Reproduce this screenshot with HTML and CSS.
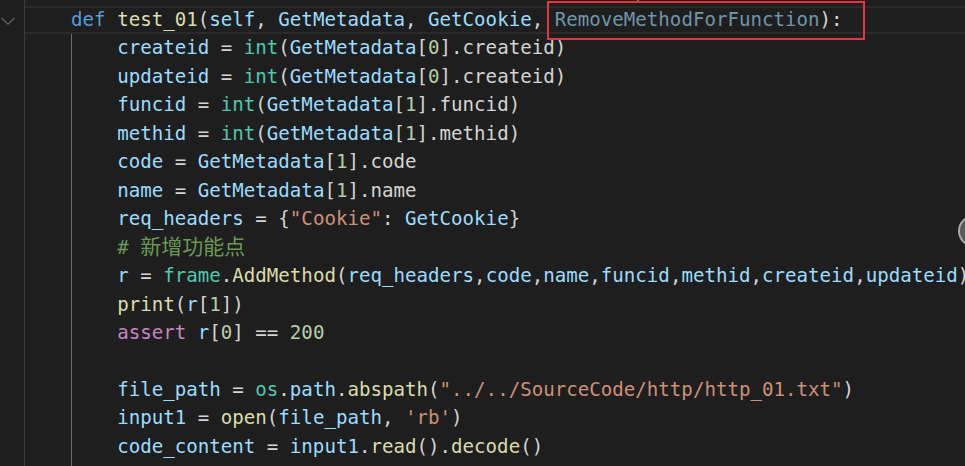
FILE: index.html
```html
<!DOCTYPE html>
<html lang="zh">
<head>
<meta charset="utf-8">
<title>test_01</title>
<link rel="stylesheet" href="styles.css">
</head>
<body>
<div class="editor">
  <div class="gutter">
    <div class="gline"></div>
    <div class="gline"><svg class="fold" width="16" height="10" viewBox="0 0 16 10"><path d="M1.5 2 L8 8.2 L14.5 2" fill="none" stroke="#5f5f5f" stroke-width="1.3"/></svg></div>
  </div>
  <div class="code">
<div class="line"><span class="cm">    #   er  (Metadata, Cookie, Method, Function) -&gt; 'p'</span></div>
<div class="line cur"><span class="tx">    </span><span class="kw">def</span> <span class="fn">test_01</span><span class="p">(</span><span class="v">self</span><span class="p">,</span> <span class="v">GetMetadata</span><span class="p">,</span> <span class="v">GetCookie</span><span class="p">,</span> <span class="dim">RemoveMethodForFunction</span><span class="p">):</span></div>
<div class="line g"><span class="ind">    </span>    <span class="v">createid</span> = <span class="cl">int</span><span class="p">(</span><span class="v">GetMetadata</span><span class="p">[</span><span class="n">0</span><span class="p">]</span>.createid<span class="p">)</span></div>
<div class="line g"><span class="ind">    </span>    <span class="v">updateid</span> = <span class="cl">int</span><span class="p">(</span><span class="v">GetMetadata</span><span class="p">[</span><span class="n">0</span><span class="p">]</span>.createid<span class="p">)</span></div>
<div class="line g"><span class="ind">    </span>    <span class="v">funcid</span> = <span class="cl">int</span><span class="p">(</span><span class="v">GetMetadata</span><span class="p">[</span><span class="n">1</span><span class="p">]</span>.funcid<span class="p">)</span></div>
<div class="line g"><span class="ind">    </span>    <span class="v">methid</span> = <span class="cl">int</span><span class="p">(</span><span class="v">GetMetadata</span><span class="p">[</span><span class="n">1</span><span class="p">]</span>.methid<span class="p">)</span></div>
<div class="line g"><span class="ind">    </span>    <span class="v">code</span> = <span class="v">GetMetadata</span><span class="p">[</span><span class="n">1</span><span class="p">]</span>.code</div>
<div class="line g"><span class="ind">    </span>    <span class="v">name</span> = <span class="v">GetMetadata</span><span class="p">[</span><span class="n">1</span><span class="p">]</span>.name</div>
<div class="line g"><span class="ind">    </span>    <span class="v">req_headers</span> = <span class="p">{</span><span class="s">"Cookie"</span>: <span class="v">GetCookie</span><span class="p">}</span></div>
<div class="line g"><span class="ind">    </span>    <span class="cm"># <span class="cjk">新增功能点</span></span></div>
<div class="line g"><span class="ind">    </span>    <span class="v">r</span> = <span class="cl">frame</span>.<span class="fn">AddMethod</span><span class="p">(</span><span class="v">req_headers</span>,<span class="v">code</span>,<span class="v">name</span>,<span class="v">funcid</span>,<span class="v">methid</span>,<span class="v">createid</span>,<span class="v">updateid</span><span class="p">)</span></div>
<div class="line g"><span class="ind">    </span>    <span class="fn">print</span><span class="p">(</span><span class="v">r</span><span class="p">[</span><span class="n">1</span><span class="p">])</span></div>
<div class="line g"><span class="ind">    </span>    <span class="ctl">assert</span> <span class="v">r</span><span class="p">[</span><span class="n">0</span><span class="p">]</span> == <span class="n">200</span></div>
<div class="line g"><span class="ind">    </span> </div>
<div class="line g"><span class="ind">    </span>    <span class="v">file_path</span> = <span class="cl">os</span>.<span class="v">path</span>.<span class="fn">abspath</span><span class="p">(</span><span class="s">"../../SourceCode/http/http_01.txt"</span><span class="p">)</span></div>
<div class="line g"><span class="ind">    </span>    <span class="v">input1</span> = <span class="fn">open</span><span class="p">(</span><span class="v">file_path</span>, <span class="s">'rb'</span><span class="p">)</span></div>
<div class="line g"><span class="ind">    </span>    <span class="v">code_content</span> = <span class="v">input1</span>.<span class="fn">read</span><span class="p">()</span>.<span class="fn">decode</span><span class="p">()</span></div>
<div class="line g"><span class="ind">    </span> </div>
    <div class="mark"></div>
  </div>
  <div class="float-btn"></div>
</div>
</body>
</html>
```

FILE: styles.css
```css
html, body {
  margin: 0;
  padding: 0;
  background: #1e1e1e;
  overflow: hidden;
}

.editor {
  position: relative;
  display: flex;
  width: 965px;
  height: 466px;
  overflow: hidden;
  background: #1e1e1e;
}

.gutter {
  width: 24px;
  flex: none;
  margin-top: -22.67px;
  display: flex;
  flex-direction: column;
}

.gline {
  height: 28.47px;
  display: flex;
  align-items: center;
}

.fold {
  display: block;
  margin-top: 2px;
}

.code {
  position: relative;
  flex: 1;
  align-self: flex-start;
  border-left: 1px solid #3c3c3c;
  margin-top: -22.67px;
  min-height: 520px;
  font-family: "DejaVu Sans Mono", "Liberation Mono", monospace;
  font-size: 19.14px;
  color: #d4d4d4;
}

.line {
  height: 28.47px;
  line-height: 28.47px;
  box-sizing: border-box;
  white-space: pre;
  overflow: visible;
}

.line.cur {
  border-top: 2px solid #2a2a2a;
  border-bottom: 2px solid #2a2a2a;
  line-height: 24.47px;
}

.ind {
  display: inline-block;
  vertical-align: top;
  height: 28.47px;
  box-sizing: border-box;
  border-right: 1px solid #6e6e6e;
  margin-right: -1px;
}

.kw { color: #569cd6; }
.fn { color: #dcdcaa; }
.v { color: #9cdcfe; }
.cl { color: #4ec9b0; }
.p { color: #d4d4d4; }
.n { color: #b5cea8; }
.s { color: #ce9178; }
.cm { color: #6a9955; }
.ctl { color: #c586c0; }
.dim { color: #6f95aa; }

.cjk {
  font-family: "Noto Sans CJK SC", sans-serif;
  font-size: 21px;
  line-height: 1;
}

.mark {
  position: absolute;
  left: 522px;
  top: 23.67px;
  width: 318px;
  height: 39px;
  box-sizing: border-box;
  border: 2px solid #e8343c;
}

.float-btn {
  position: absolute;
  left: 958px;
  top: 215px;
  width: 32px;
  height: 32px;
  border-radius: 50%;
  background: #5a5a5a;
  border: 2px solid #a8a8a8;
  box-sizing: border-box;
}
```
